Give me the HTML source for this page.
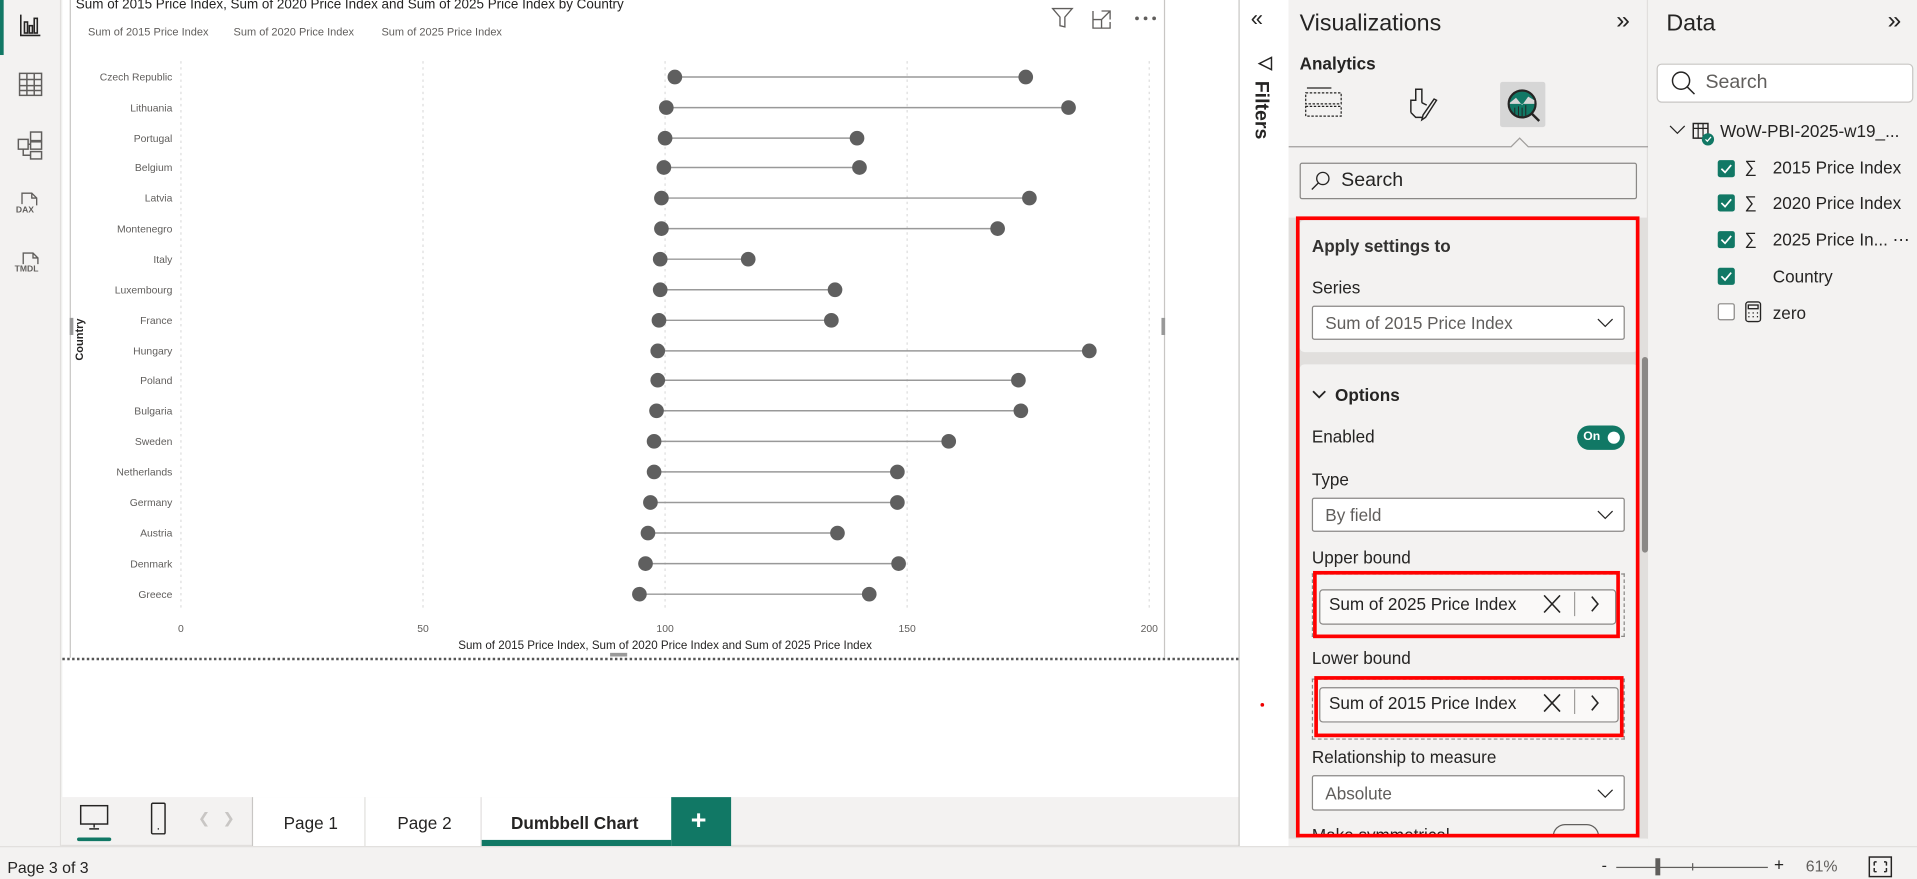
<!DOCTYPE html>
<html><head><meta charset="utf-8"><style>
*{margin:0;padding:0;box-sizing:border-box}
html,body{width:1917px;height:879px;overflow:hidden;background:#f3f2f1;font-family:"Liberation Sans",sans-serif;color:#252423}
#w{position:absolute;left:0;top:0;width:1568px;height:719px;transform:scale(1.22258);transform-origin:0 0;background:#f3f2f1}
.a{position:absolute}
.t{position:absolute;white-space:nowrap}
.dd{position:absolute;background:#fff;border:1px solid #8a8886;border-radius:2px;font-size:14px;color:#605e5c;padding-left:10px;display:flex;align-items:center}
.dd svg{position:absolute;right:8px}
.lab{position:absolute;font-size:14px;color:#252423}
.cb{position:absolute;width:14px;height:14px;background:#117865;border-radius:2px}
.cbo{position:absolute;width:14px;height:14px;border:1px solid #8a8886;border-radius:2px;background:#fff}
.di{position:absolute;font-size:14px;color:#252423}
</style></head><body><div id="w">

<!-- left nav -->
<div class="a" style="left:0;top:0;width:50px;height:692px;background:#f3f2f1;border-right:1px solid #e1dfdd"></div>
<div class="a" style="left:0;top:0;width:3px;height:45px;background:#117865"></div>
<svg class="a" style="left:15px;top:10px" width="20" height="22" viewBox="0 0 20 22" fill="none" stroke="#252423" stroke-width="1.3"><path d="M2 2v17h16"/><rect x="5" y="8" width="2.5" height="9"/><rect x="9" y="11" width="2.5" height="6"/><rect x="13" y="5" width="2.5" height="12"/></svg>
<svg class="a" style="left:14px;top:58px" width="22" height="22" viewBox="0 0 22 22" fill="none" stroke="#605e5c" stroke-width="1.2"><rect x="2" y="2" width="18" height="18"/><path d="M2 7h18M2 12h18M2 16h18M8 2v18M14 2v18"/></svg>
<svg class="a" style="left:13px;top:106px" width="24" height="26" viewBox="0 0 24 26" fill="none" stroke="#605e5c" stroke-width="1.2"><rect x="2" y="8" width="8" height="8"/><rect x="12" y="2" width="9" height="7"/><rect x="12" y="10" width="9" height="6"/><rect x="12" y="18" width="9" height="6"/><path d="M10 12h2M6 16v5h6"/></svg>
<svg class="a" style="left:13px;top:155px" width="24" height="26" viewBox="0 0 24 26" fill="none" stroke="#605e5c" stroke-width="1.1"><path d="M5 12V3h8l4 4v6M13 3v4h4"/></svg>
<div class="t" style="left:13px;top:169px;font-size:7px;font-weight:bold;color:#605e5c">DAX</div>
<svg class="a" style="left:14px;top:204px" width="24" height="20" viewBox="0 0 24 20" fill="none" stroke="#605e5c" stroke-width="1.1"><path d="M5 12V3h8l4 4v5M13 3v4h4"/></svg>
<div class="t" style="left:12px;top:217px;font-size:7px;font-weight:bold;color:#605e5c">TMDL</div>

<!-- canvas -->
<div class="a" style="left:51px;top:0;width:962px;height:652px;background:#fff"></div>
<div class="a" style="left:51px;top:538px;width:962px;height:0;border-top:2px dotted #555"></div>
<div class="a" style="left:57px;top:0;width:896px;height:538px;border-left:1px solid #c8c6c4;border-right:1px solid #c8c6c4"></div>
<div class="a" style="left:57px;top:260px;width:3px;height:14px;background:#999"></div>
<div class="a" style="left:950px;top:260px;width:3px;height:14px;background:#999"></div>
<div class="a" style="left:499px;top:534px;width:14px;height:3px;background:#999"></div>
<div class="t" style="left:62px;top:-2px;font-size:11px;color:#252423">Sum of 2015 Price Index, Sum of 2020 Price Index and Sum of 2025 Price Index by Country</div>
<div class="t" style="left:72px;top:21px;font-size:9px;color:#605e5c">Sum of 2015 Price Index</div>
<div class="t" style="left:191px;top:21px;font-size:9px;color:#605e5c">Sum of 2020 Price Index</div>
<div class="t" style="left:312px;top:21px;font-size:9px;color:#605e5c">Sum of 2025 Price Index</div>
<svg class="a" style="left:860px;top:5px" width="90" height="20" viewBox="0 0 90 20" fill="none" stroke="#605e5c" stroke-width="1.1"><path d="M1 2h16l-6 7v8l-4-1V9z"/><path d="M34 4v14h14v-5M34 11h7v7M41 4h7v7M48 4l-7 7"/><circle cx="70" cy="10" r="1" fill="#605e5c"/><circle cx="77" cy="10" r="1" fill="#605e5c"/><circle cx="84" cy="10" r="1" fill="#605e5c"/></svg>
<div class="t" style="left:60px;top:295px;font-size:9px;font-weight:bold;transform:rotate(-90deg);transform-origin:0 0;color:#252423">Country</div>

<svg class="a" style="left:0;top:0" width="1013" height="540">
<g stroke="#ddd" stroke-dasharray="2,3" stroke-width="1"><path d="M148 50V500M346 50V500M544 50V500M742 50V500M940 50V500"/></g>
<g stroke="#999" stroke-width="1.2">
<path d="M552 63H839M545 88H874M544 113H701M543 137H703M541 162H842M541 187H816M540 212H612M540 237H683M539 262H680M538 287H891M538 311H833M537 336H835M535 361H776M535 386H734M532 411H734M530 436H685M528 461H735M523 486H711"/>
</g>
<g fill="#5f5f5f">
<circle cx="552" cy="63" r="6"/><circle cx="839" cy="63" r="6"/>
<circle cx="545" cy="88" r="6"/><circle cx="874" cy="88" r="6"/>
<circle cx="544" cy="113" r="6"/><circle cx="701" cy="113" r="6"/>
<circle cx="543" cy="137" r="6"/><circle cx="703" cy="137" r="6"/>
<circle cx="541" cy="162" r="6"/><circle cx="842" cy="162" r="6"/>
<circle cx="541" cy="187" r="6"/><circle cx="816" cy="187" r="6"/>
<circle cx="540" cy="212" r="6"/><circle cx="612" cy="212" r="6"/>
<circle cx="540" cy="237" r="6"/><circle cx="683" cy="237" r="6"/>
<circle cx="539" cy="262" r="6"/><circle cx="680" cy="262" r="6"/>
<circle cx="538" cy="287" r="6"/><circle cx="891" cy="287" r="6"/>
<circle cx="538" cy="311" r="6"/><circle cx="833" cy="311" r="6"/>
<circle cx="537" cy="336" r="6"/><circle cx="835" cy="336" r="6"/>
<circle cx="535" cy="361" r="6"/><circle cx="776" cy="361" r="6"/>
<circle cx="535" cy="386" r="6"/><circle cx="734" cy="386" r="6"/>
<circle cx="532" cy="411" r="6"/><circle cx="734" cy="411" r="6"/>
<circle cx="530" cy="436" r="6"/><circle cx="685" cy="436" r="6"/>
<circle cx="528" cy="461" r="6"/><circle cx="735" cy="461" r="6"/>
<circle cx="523" cy="486" r="6"/><circle cx="711" cy="486" r="6"/>
</g>
<g fill="#605e5c" font-size="8.5" font-family="Liberation Sans" text-anchor="end">
<text x="141" y="66">Czech Republic</text><text x="141" y="91">Lithuania</text><text x="141" y="116">Portugal</text><text x="141" y="140">Belgium</text><text x="141" y="165">Latvia</text><text x="141" y="190">Montenegro</text><text x="141" y="215">Italy</text><text x="141" y="240">Luxembourg</text><text x="141" y="265">France</text><text x="141" y="290">Hungary</text><text x="141" y="314">Poland</text><text x="141" y="339">Bulgaria</text><text x="141" y="364">Sweden</text><text x="141" y="389">Netherlands</text><text x="141" y="414">Germany</text><text x="141" y="439">Austria</text><text x="141" y="464">Denmark</text><text x="141" y="489">Greece</text>
</g>
<g fill="#605e5c" font-size="8.5" font-family="Liberation Sans" text-anchor="middle">
<text x="148" y="517">0</text><text x="346" y="517">50</text><text x="544" y="517">100</text><text x="742" y="517">150</text><text x="940" y="517">200</text>
<text x="544" y="531" fill="#252423" font-size="9.5">Sum of 2015 Price Index, Sum of 2020 Price Index and Sum of 2025 Price Index</text>
</g>
</svg>

<!-- filters strip -->
<div class="a" style="left:1013px;top:0;width:41px;height:692px;background:#fff;border-left:1px solid #c8c6c4"></div>
<div class="t" style="left:1023px;top:5px;font-size:18px;color:#252423">«</div>
<svg class="a" style="left:1028px;top:46px" width="14" height="14" viewBox="0 0 14 14" fill="none" stroke="#252423" stroke-width="1.2"><path d="M12 1L2 6l10 5z"/></svg>
<div class="t" style="left:1040px;top:66px;font-size:16px;font-weight:bold;transform:rotate(90deg);transform-origin:0 0;color:#252423">Filters</div>
<div class="a" style="left:1031px;top:575px;width:3px;height:3px;border-radius:50%;background:#e00"></div>

<!-- viz pane -->
<div class="a" style="left:1054px;top:0;width:294px;height:692px;background:#f3f2f1;border-right:1px solid #e1dfdd"></div>
<div class="t" style="left:1063px;top:9px;font-size:19px;color:#252423">Visualizations</div>
<div class="t" style="left:1322px;top:6px;font-size:20px;color:#252423">»</div>
<div class="t" style="left:1063px;top:44px;font-size:14px;font-weight:bold;color:#252423">Analytics</div>
<svg class="a" style="left:1066px;top:70px" width="34" height="40" viewBox="0 0 34 40" fill="none" stroke="#252423" stroke-width="1"><path d="M3 2h20"/><path d="M2 6h29v9H2zM2 17h29v8H2z" stroke-dasharray="2,1.3"/></svg>
<svg class="a" style="left:1150px;top:70px" width="34" height="40" viewBox="0 0 34 40" fill="none" stroke="#252423" stroke-width="1.2"><path d="M4 22V12h4V3h5v11M4 22l4 4h6M13 14l4 2M25 12l-9 14-3 2 1-4 9-13z"/></svg>
<div class="a" style="left:1227px;top:67px;width:37px;height:37px;background:#d6d6d6;border-radius:2px"></div>
<svg class="a" style="left:1228px;top:68px" width="36" height="36" viewBox="0 0 36 36"><circle cx="17" cy="17" r="11" fill="#117865" stroke="#252423" stroke-width="1.8"/><path d="M7 16l5-4 5 6 5-7 5 3v3H7z" fill="#d6d6d6"/><path d="M11 20v7M14 19v9M17 20v8M20 18v9" stroke="#252423" stroke-width="0.8"/><path d="M25 25l6 6" stroke="#252423" stroke-width="2"/></svg>
<svg class="a" style="left:1054px;top:108px" width="294" height="14"><path d="M0 12H182l7-7 7 7H294" fill="none" stroke="#a19f9d" stroke-width="1"/></svg>
<div class="a" style="left:1063px;top:133px;width:276px;height:30px;background:#f3f2f1;border:1px solid #8a8886;border-radius:2px"></div>
<svg class="a" style="left:1071px;top:139px" width="18" height="18" viewBox="0 0 18 18" fill="none" stroke="#252423" stroke-width="1.1"><circle cx="11" cy="7" r="5"/><path d="M7.5 10.5L2 16"/></svg>
<div class="t" style="left:1097px;top:139px;font-size:16px;color:#252423">Search</div>

<!-- scroll area -->
<div class="a" style="left:1054px;top:178px;width:294px;height:508px;background:#e1dfdd"></div>
<div class="a" style="left:1063px;top:180px;width:277px;height:108px;background:#f3f2f1;border-radius:4px"></div>
<div class="a" style="left:1063px;top:298px;width:277px;height:388px;background:#f3f2f1;border-radius:4px 4px 0 0"></div>
<div class="a" style="left:1343px;top:292px;width:5px;height:160px;background:#8a8886;border-radius:3px"></div>
<div class="t" style="left:1073px;top:193px;font-size:14px;font-weight:bold;color:#323130">Apply settings to</div>
<div class="lab" style="left:1073px;top:227px">Series</div>
<div class="dd" style="left:1073px;top:250px;width:256px;height:28px">Sum of 2015 Price Index<svg width="14" height="8" viewBox="0 0 14 8"><path d="M1 1l6 6 6-6" fill="none" stroke="#252423"/></svg></div>
<svg class="a" style="left:1073px;top:318px" width="12" height="10" viewBox="0 0 12 10"><path d="M1 2l5 5 5-5" fill="none" stroke="#252423" stroke-width="1.5"/></svg>
<div class="t" style="left:1092px;top:315px;font-size:14px;font-weight:bold;color:#252423">Options</div>
<div class="lab" style="left:1073px;top:349px">Enabled</div>
<div class="a" style="left:1290px;top:348px;width:39px;height:20px;background:#117865;border-radius:10px"></div>
<div class="t" style="left:1295px;top:352px;font-size:10px;color:#fff;font-weight:bold">On</div>
<div class="a" style="left:1315px;top:353px;width:10px;height:10px;border-radius:50%;background:#fff"></div>
<div class="lab" style="left:1073px;top:384px">Type</div>
<div class="dd" style="left:1073px;top:407px;width:256px;height:28px">By field<svg width="14" height="8" viewBox="0 0 14 8"><path d="M1 1l6 6 6-6" fill="none" stroke="#252423"/></svg></div>
<div class="lab" style="left:1073px;top:448px">Upper bound</div>
<div class="a" style="left:1073px;top:469px;width:256px;height:52px;border:1px dashed #8a8886"></div>
<div class="a" style="left:1079px;top:482px;width:243px;height:29px;background:#faf9f8;border:1px solid #8a8886;border-radius:3px"></div>
<div class="t" style="left:1087px;top:486px;font-size:14px;color:#252423">Sum of 2025 Price Index</div>
<div class="lab" style="left:1073px;top:530px">Lower bound</div>
<div class="a" style="left:1073px;top:555px;width:256px;height:50px;border:1px dashed #8a8886"></div>
<div class="a" style="left:1079px;top:562px;width:245px;height:29px;background:#faf9f8;border:1px solid #8a8886;border-radius:3px"></div>
<div class="t" style="left:1087px;top:567px;font-size:14px;color:#252423">Sum of 2015 Price Index</div>
<svg class="a" style="left:1260px;top:484px" width="60" height="110" viewBox="0 0 60 110" fill="none" stroke="#252423" stroke-width="1.3"><path d="M3 3l13 14M16 3L3 17M3 84l13 14M16 84L3 98"/><path d="M28 0v20M28 80v20" stroke="#8a8886" stroke-width="0.8"/><path d="M42 4l5 6-5 6M42 85l5 6-5 6"/></svg>
<div class="lab" style="left:1073px;top:611px">Relationship to measure</div>
<div class="dd" style="left:1073px;top:634px;width:256px;height:29px">Absolute<svg width="14" height="8" viewBox="0 0 14 8"><path d="M1 1l6 6 6-6" fill="none" stroke="#252423"/></svg></div>
<div class="t" style="left:1073px;top:675px;font-size:14px;color:#252423;height:9px;overflow:hidden">Make symmetrical</div>
<div class="a" style="left:1270px;top:674px;width:38px;height:10px;border:1px solid #605e5c;border-bottom:none;border-radius:10px 10px 0 0"></div>
<div class="a" style="left:1054px;top:686px;width:294px;height:6px;background:#f3f2f1"></div>
<!-- red rects -->
<div class="a" style="left:1060px;top:177px;width:281px;height:508px;border:3px solid #f00"></div>
<div class="a" style="left:1074px;top:467px;width:251px;height:55px;border:3px solid #f00"></div>
<div class="a" style="left:1075px;top:553px;width:253px;height:50px;border:3px solid #f00"></div>

<!-- data pane -->
<div class="t" style="left:1363px;top:9px;font-size:19px;color:#252423">Data</div>
<div class="t" style="left:1544px;top:6px;font-size:20px;color:#252423">»</div>
<div class="a" style="left:1355px;top:52px;width:210px;height:32px;background:#fff;border:1px solid #c8c6c4;border-radius:4px"></div>
<svg class="a" style="left:1366px;top:57px" width="22" height="22" viewBox="0 0 22 22" fill="none" stroke="#252423" stroke-width="1.2"><circle cx="9" cy="9" r="7"/><path d="M14 14l6 6"/></svg>
<div class="t" style="left:1395px;top:59px;font-size:16px;color:#605e5c">Search</div>
<svg class="a" style="left:1365px;top:102px" width="14" height="10" viewBox="0 0 14 10"><path d="M1 1l6 6 6-6" fill="none" stroke="#252423"/></svg>
<svg class="a" style="left:1383px;top:99px" width="22" height="22" viewBox="0 0 22 22"><rect x="2" y="2" width="12" height="12" fill="none" stroke="#252423" stroke-width="1.2"/><path d="M2 6h12M6 2v12M10 2v12" stroke="#252423" stroke-width="1"/><circle cx="14" cy="15" r="5" fill="#117865"/><path d="M12 15l1.5 1.5L16.5 13" stroke="#fff" fill="none"/></svg>
<div class="t" style="left:1407px;top:99px;font-size:14px;color:#252423">WoW-PBI-2025-w19_...</div>
<div class="cb" style="left:1405px;top:131px"></div><div class="cb" style="left:1405px;top:159px"></div><div class="cb" style="left:1405px;top:189px"></div><div class="cb" style="left:1405px;top:219px"></div>
<div class="cbo" style="left:1405px;top:248px"></div>
<svg class="a" style="left:1405px;top:131px" width="14" height="104" viewBox="0 0 14 104" fill="none" stroke="#fff" stroke-width="1.4"><path d="M3 7l3 3 5-6M3 35l3 3 5-6M3 65l3 3 5-6M3 95l3 3 5-6"/></svg>
<div class="di" style="left:1427px;top:128px">∑</div><div class="di" style="left:1427px;top:157px">∑</div><div class="di" style="left:1427px;top:187px">∑</div>
<div class="di" style="left:1450px;top:129px">2015 Price Index</div>
<div class="di" style="left:1450px;top:158px">2020 Price Index</div>
<div class="di" style="left:1450px;top:188px">2025 Price In... ⋯</div>
<div class="di" style="left:1450px;top:218px">Country</div>
<svg class="a" style="left:1427px;top:246px" width="14" height="18" viewBox="0 0 14 18" fill="none" stroke="#252423" stroke-width="1.1"><rect x="1" y="1" width="12" height="16" rx="2"/><rect x="3" y="3.5" width="8" height="3"/><path d="M3 10h1M6.5 10h1M10 10h1M3 13h1M6.5 13h1M10 13h1"/></svg>
<div class="di" style="left:1450px;top:248px">zero</div>

<!-- bottom tabs -->
<div class="a" style="left:50px;top:652px;width:963px;height:40px;background:#f3f2f1;border-bottom:1px solid #e1dfdd"></div>
<svg class="a" style="left:64px;top:657px" width="28" height="30" viewBox="0 0 28 30" fill="none" stroke="#252423" stroke-width="1.2"><rect x="2" y="2" width="22" height="15"/><path d="M13 17v3M9 21h8"/></svg>
<div class="a" style="left:63px;top:685px;width:28px;height:3px;background:#117865;border-radius:2px"></div>
<svg class="a" style="left:122px;top:655px" width="16" height="30" viewBox="0 0 16 30" fill="none" stroke="#252423" stroke-width="1.2"><rect x="2" y="2" width="11" height="25" rx="1"/><path d="M7 23h1"/></svg>
<div class="t" style="left:162px;top:662px;font-size:12px;color:#c8c6c4">❮ &nbsp; ❯</div>
<div class="a" style="left:206px;top:652px;width:343px;height:40px;background:#fff;border-left:1px solid #c8c6c4"></div>
<div class="a" style="left:298px;top:652px;width:1px;height:40px;background:#e1dfdd"></div>
<div class="a" style="left:393px;top:652px;width:1px;height:40px;background:#e1dfdd"></div>
<div class="t" style="left:232px;top:665px;font-size:14px;color:#252423">Page 1</div>
<div class="t" style="left:325px;top:665px;font-size:14px;color:#252423">Page 2</div>
<div class="t" style="left:418px;top:665px;font-size:14px;font-weight:bold;color:#252423">Dumbbell Chart</div>
<div class="a" style="left:394px;top:687px;width:155px;height:5px;background:#117865"></div>
<div class="a" style="left:549px;top:652px;width:49px;height:40px;background:#117865"></div>
<div class="t" style="left:565px;top:658px;font-size:22px;font-weight:bold;color:#fff">+</div>
<div class="a" style="left:0;top:692px;width:1568px;height:1px;background:#e1dfdd"></div>

<!-- status bar -->
<div class="t" style="left:6px;top:702px;font-size:13px;color:#252423">Page 3 of 3</div>
<div class="t" style="left:1310px;top:700px;font-size:13px;color:#252423">-</div>
<div class="a" style="left:1322px;top:709px;width:124px;height:1px;background:#605e5c"></div>
<div class="a" style="left:1354px;top:702px;width:4px;height:14px;background:#605e5c"></div>
<div class="a" style="left:1384px;top:706px;width:1px;height:6px;background:#605e5c"></div>
<div class="t" style="left:1451px;top:699px;font-size:14px;color:#252423">+</div>
<div class="t" style="left:1477px;top:701px;font-size:13px;color:#605e5c">61%</div>
<svg class="a" style="left:1528px;top:700px" width="20" height="18" viewBox="0 0 20 18" fill="none" stroke="#252423" stroke-width="1.2"><rect x="1" y="1" width="18" height="16"/><path d="M5 5v3M5 5h2M15 5v3M15 5h-2M5 13v-3M5 13h2M15 13v-3M15 13h-2"/></svg>

</div></body></html>
